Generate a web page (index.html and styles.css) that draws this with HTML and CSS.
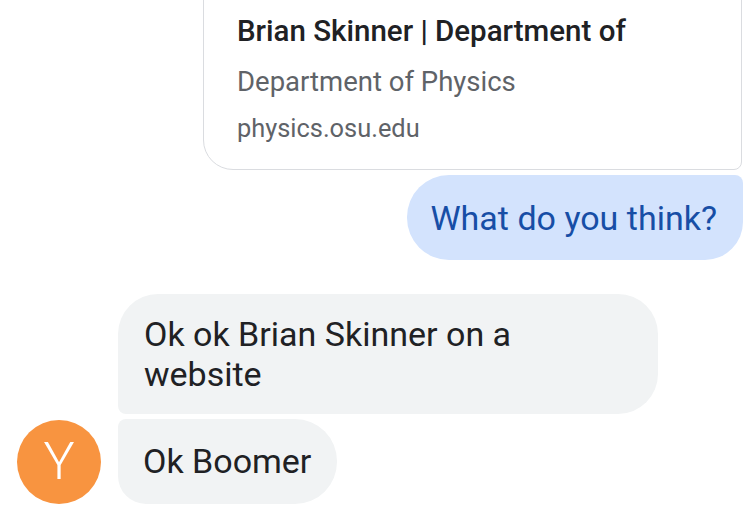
FILE: index.html
```html
<!DOCTYPE html>
<html lang="en">
<head>
<meta charset="utf-8">
<link rel="stylesheet" href="styles.css">
<title>Chat</title>
</head>
<body>
<div class="thread">
  <div class="row out">
    <div class="card">
      <div class="card-title">Brian Skinner | Department of</div>
      <div class="card-sub">Department of Physics</div>
      <div class="card-url">physics.osu.edu</div>
    </div>
  </div>
  <div class="row out row-tight">
    <div class="bubble bubble-out">What do you think?</div>
  </div>
  <div class="group">
    <div class="avatar">Y</div>
    <div class="stack">
      <div class="bubble bubble-in bubble-first">Ok ok Brian Skinner on a website</div>
      <div class="bubble bubble-in bubble-last">Ok Boomer</div>
    </div>
  </div>
</div>
</body>
</html>
```
FILE: styles.css
```css
html, body {
  margin: 0;
  padding: 0;
  background: #ffffff;
}
body {
  width: 751px;
  height: 518px;
  overflow: hidden;
  font-family: Roboto, "Noto Sans", sans-serif;
}
.thread {
  display: flex;
  flex-direction: column;
  padding: 0 8px 0 17px;
}
.row {
  display: flex;
}
.out {
  justify-content: flex-end;
}
.row-tight {
  margin-top: 5px;
}
.card {
  width: 539px;
  box-sizing: border-box;
  margin-top: -30px;
  margin-right: 1px;
  padding: 42.4px 16px 25px 33px;
  border: 1.5px solid #dadce0;
  border-radius: 30px 30px 8px 30px;
  background: #fff;
}
.card-title {
  font-size: 29.5px;
  line-height: 36px;
  font-weight: 500;
  color: #202124;
  white-space: nowrap;
}
.card-sub {
  margin-top: 14.2px;
  font-size: 27.5px;
  line-height: 36px;
  color: #5f6368;
}
.card-url {
  margin-top: 12.7px;
  font-size: 25.4px;
  line-height: 32px;
  color: #5f6368;
}
.bubble {
  font-size: 34px;
  line-height: 40px;
  padding: 22.5px 26px 22.5px 25px;
  box-sizing: border-box;
}
.bubble-out {
  background: #d3e3fd;
  color: #174ea6;
  padding-left: 23px;
  border-radius: 42px 8px 38px 42px;
}
.group {
  display: flex;
  align-items: flex-end;
  gap: 17px;
  margin-top: 34px;
}
.avatar {
  width: 84px;
  height: 84px;
  flex: none;
  border-radius: 50%;
  background: #f89440;
  color: #ffffff;
  font-weight: 300;
  font-size: 52px;
  display: flex;
  align-items: center;
  justify-content: center;
}
.stack {
  display: flex;
  flex-direction: column;
  align-items: flex-start;
  gap: 5px;
}
.bubble-in {
  background: #f1f3f4;
  color: #202124;
}
.bubble-first {
  max-width: 540px;
  padding: 20px 44px 19.5px 26px;
  border-radius: 40px 40px 40px 8px;
}
.bubble-last {
  border-radius: 8px 42px 42px 28px;
}
```
